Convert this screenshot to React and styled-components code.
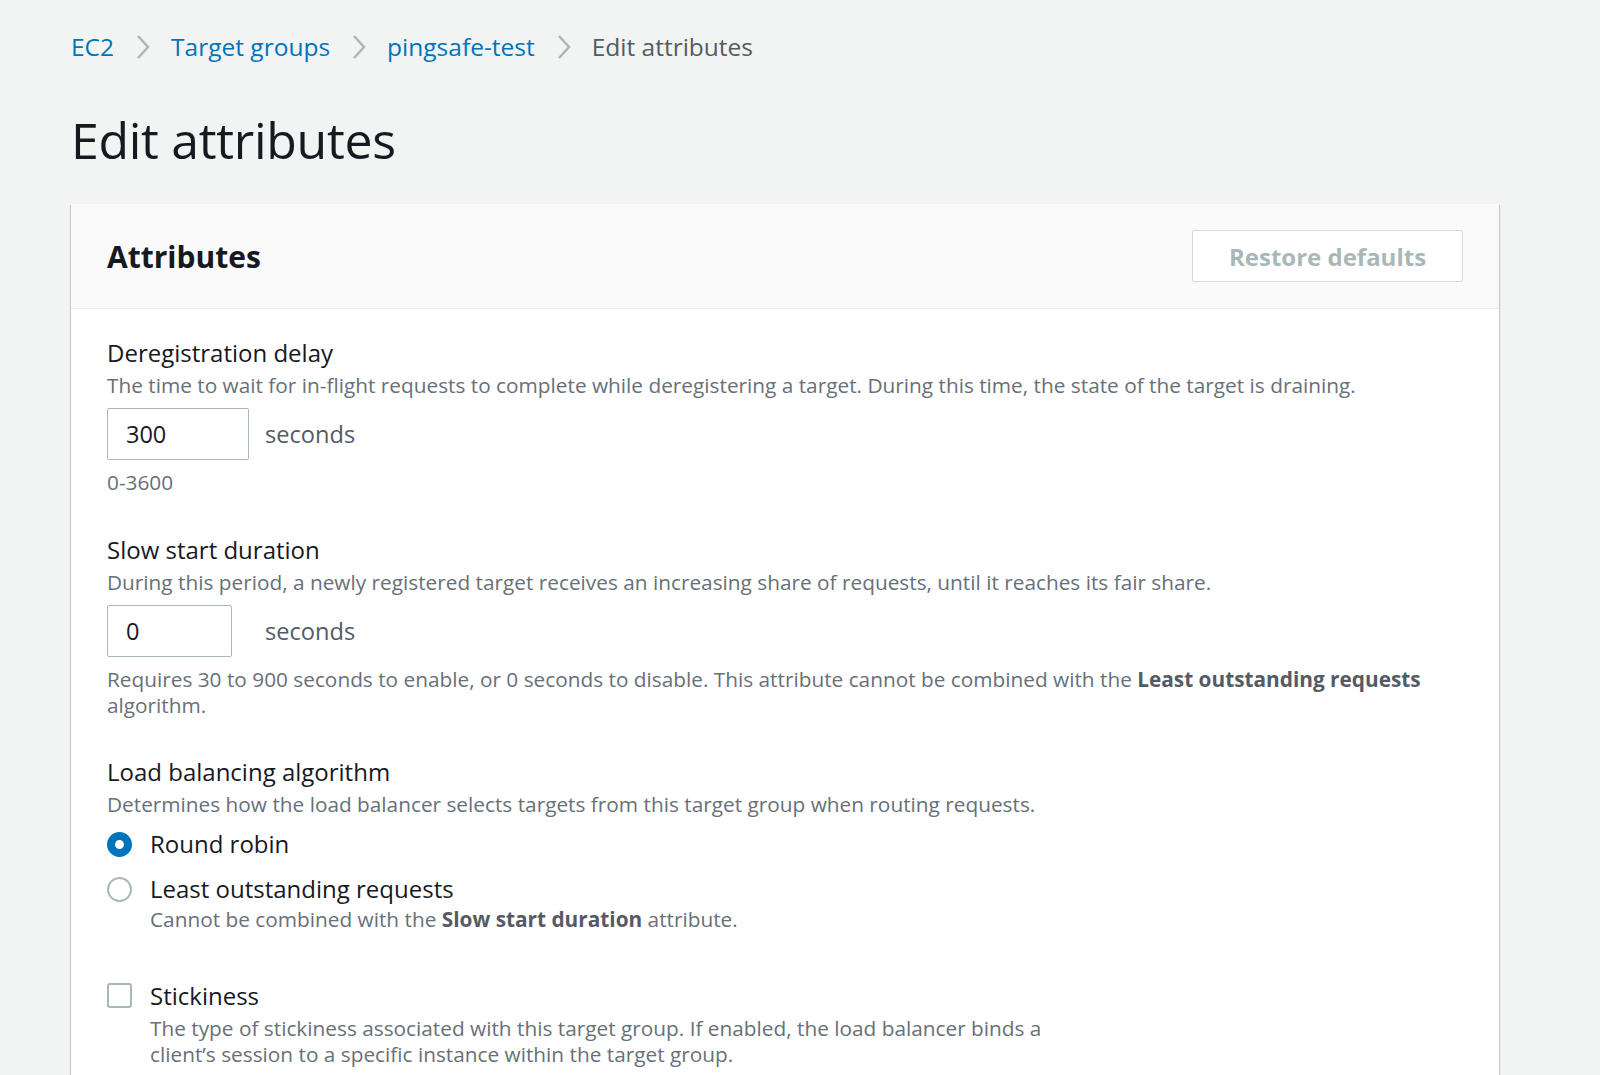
import React from 'react'
import styled, { createGlobalStyle } from 'styled-components'

const GlobalStyle = createGlobalStyle`
body {
  margin: 0;
  background-color: #f2f3f3;
  font-family: "Open Sans", "Noto Sans", sans-serif;
  color: #16191f;
}
`

const Page = styled.div`
padding: 32px 0 0 71px;
width: 1428px;
`

const Crumbs = styled.nav`
display: flex;
align-items: center;
height: 30px;
font-size: 24.5px;
line-height: 30px;
`

const Crumb = styled.span`
color: ${p => (p.current ? '#545b64' : '#0073bb')};
`

const Chevron = styled.span`
display: flex;
align-items: center;
margin: 0 21px 0 22px;
`

const Title = styled.h1`
margin: 48px 0 34px;
font-size: 50px;
font-weight: 400;
line-height: 60px;
letter-spacing: -0.3px;
`

const Card = styled.section`
background: #fff;
box-shadow: 0 1px 1px 0 rgba(0, 28, 36, 0.3), 1px 1px 1px 0 rgba(0, 28, 36, 0.15), -1px 1px 1px 0 rgba(0, 28, 36, 0.15);
`

const CardHeader = styled.header`
display: flex;
align-items: center;
justify-content: space-between;
height: 104px;
padding: 0 36px 0 36px;
background: #fafafa;
border-bottom: 1px solid #eaeded;
`

const CardTitle = styled.h2`
margin: 0;
font-size: 30px;
font-weight: 700;
`

const GhostButton = styled.button`
width: 271px;
height: 52px;
background: #fff;
border: 1px solid #d5dbdb;
border-radius: 2px;
color: #aab7b8;
font-family: inherit;
font-size: 24px;
font-weight: 700;
`

const CardBody = styled.div`
padding: 29px 36px 24px;
`

const Field = styled.div`
margin-bottom: ${p => p.gap || 40}px;
`

const Label = styled.div`
font-size: 24px;
line-height: 30px;
`

const Desc = styled.div`
margin-top: ${p => p.top ?? 4}px;
max-width: ${p => p.max || 1400}px;
color: #687078;
font-size: 20.8px;
line-height: 26.5px;
b {
  font-weight: 700;
  color: #545b64;
}
`

const InputRow = styled.div`
display: flex;
align-items: center;
margin: 9px 0;
`

const InputCell = styled.div`
width: 158px;
`

const NumberInput = styled.input`
box-sizing: border-box;
width: ${p => p.w}px;
height: 52px;
padding: 0 18px;
border: 1px solid #aab7b8;
border-radius: 2px;
font-family: inherit;
font-size: 23.5px;
color: #16191f;
`

const Unit = styled.span`
color: #545b64;
font-size: 23.6px;
`

const Option = styled.label`
display: flex;
align-items: center;
gap: 18px;
margin-top: ${p => p.top}px;
font-size: 24px;
line-height: 30px;
`

const Radio = styled.span`
box-sizing: border-box;
width: 25px;
height: 25px;
border-radius: 50%;
background: #fff;
border: ${p => (p.checked ? '8px solid #0073bb' : '2px solid #aab7b8')};
`

const Box = styled.span`
box-sizing: border-box;
width: 25px;
height: 25px;
border-radius: 3px;
border: 2px solid #aab7b8;
background: #fff;
`

const Indented = styled.div`
padding-left: 43px;
`

const ChevronIcon = () => (
  <svg width="14" height="26" viewBox="0 0 14 26">
    <path d="M2 2 L12 13 L2 24" fill="none" stroke="#aab7b8" strokeWidth="2.5" />
  </svg>
)

const crumbs = ['EC2', 'Target groups', 'pingsafe-test']

const App = () => (
  <>
    <GlobalStyle />
    <Page>
      <Crumbs>
        {crumbs.map(c => (
          <React.Fragment key={c}>
            <Crumb>{c}</Crumb>
            <Chevron><ChevronIcon /></Chevron>
          </React.Fragment>
        ))}
        <Crumb current>Edit attributes</Crumb>
      </Crumbs>
      <Title>Edit attributes</Title>
      <Card>
        <CardHeader>
          <CardTitle>Attributes</CardTitle>
          <GhostButton disabled>Restore defaults</GhostButton>
        </CardHeader>
        <CardBody>
          <Field>
            <Label>Deregistration delay</Label>
            <Desc>The time to wait for in-flight requests to complete while deregistering a target. During this time, the state of the target is draining.</Desc>
            <InputRow>
              <InputCell><NumberInput w={142} defaultValue="300" /></InputCell>
              <Unit>seconds</Unit>
            </InputRow>
            <Desc top={0}>0-3600</Desc>
          </Field>
          <Field gap={38}>
            <Label>Slow start duration</Label>
            <Desc>During this period, a newly registered target receives an increasing share of requests, until it reaches its fair share.</Desc>
            <InputRow>
              <InputCell><NumberInput w={125} defaultValue="0" /></InputCell>
              <Unit>seconds</Unit>
            </InputRow>
            <Desc top={0}>Requires 30 to 900 seconds to enable, or 0 seconds to disable. This attribute cannot be combined with the <b>Least outstanding requests</b> algorithm.</Desc>
          </Field>
          <Field gap={48}>
            <Label>Load balancing algorithm</Label>
            <Desc>Determines how the load balancer selects targets from this target group when routing requests.</Desc>
            <Option top={12}><Radio checked />Round robin</Option>
            <Option top={15}><Radio />Least outstanding requests</Option>
            <Indented>
              <Desc top={2}>Cannot be combined with the <b>Slow start duration</b> attribute.</Desc>
            </Indented>
          </Field>
          <Field>
            <Option top={0}><Box />Stickiness</Option>
            <Indented>
              <Desc max={940}>The type of stickiness associated with this target group. If enabled, the load balancer binds a client’s session to a specific instance within the target group.</Desc>
            </Indented>
          </Field>
        </CardBody>
      </Card>
    </Page>
  </>
)

export default App
